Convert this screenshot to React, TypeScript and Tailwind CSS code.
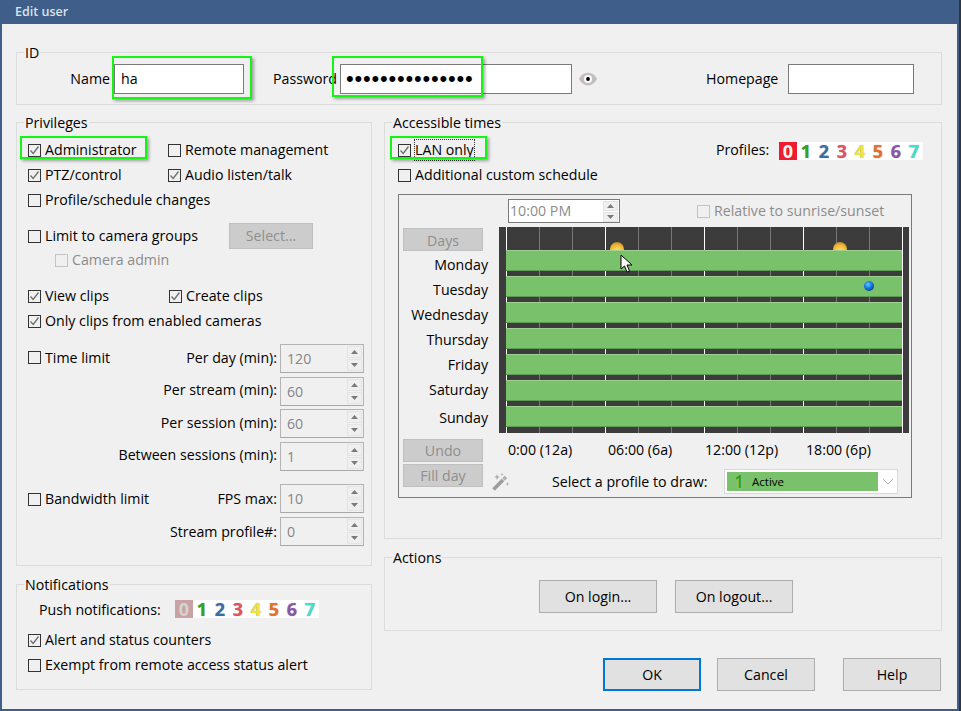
import React from 'react';

const CheckBox = ({ checked = false, disabled = false }: { checked?: boolean; disabled?: boolean }) => (
  <span className={`flex h-[13px] w-[13px] shrink-0 items-center justify-center border bg-[#f0f0f0] ${disabled ? 'border-[#c4c4c4]' : 'border-[#333333]'}`}>
    {checked && (
      <svg width="11" height="11" viewBox="0 0 11 11" fill="none">
        <path d="M1.5 5.5 L4.2 8.5 L9.5 1.5" stroke="#6e6e6e" strokeWidth="1.3" />
      </svg>
    )}
  </span>
);

const Check = ({ label, checked, disabled, focused, className = '' }: { label: string; checked?: boolean; disabled?: boolean; focused?: boolean; className?: string }) => (
  <div className={`flex h-5 items-center gap-[4px] whitespace-nowrap ${disabled ? 'text-[#8c8c8c]' : ''} ${className}`}>
    <CheckBox checked={checked} disabled={disabled} />
    <span className={focused ? 'outline-1 outline-[#333333] outline-dotted' : ''}>{label}</span>
  </div>
);

const Group = ({ title, className = '', children }: { title: string; className?: string; children: React.ReactNode }) => (
  <fieldset className={`border border-[#dcdcdc] ${className}`}>
    <legend className="ml-[7px] h-5 px-[1px] leading-[22px]">{title}</legend>
    {children}
  </fieldset>
);

const Highlight = ({ className }: { className: string }) => (
  <div className={`pointer-events-none absolute border-[2px] border-[#14f514] shadow-[2px_2px_3px_rgba(0,0,0,0.35)] ${className}`} />
);

const GrayButton = ({ label, className = '' }: { label: string; className?: string }) => (
  <div className={`flex items-center justify-center border border-[#bfbfbf] bg-[#cccccc] text-[#8f8f8f] ${className}`}>{label}</div>
);

// width and border come from the caller
const Button = ({ label, className = '' }: { label: string; className?: string }) => (
  <div className={`flex h-[33px] items-center justify-center bg-[#e1e1e1] ${className}`}>{label}</div>
);

const SpinArrows = ({ small = false }: { small?: boolean }) => (
  <div className="flex w-[15px] flex-col gap-[1px]">
    <div className={`flex items-center justify-center border border-[#e4e4e4] bg-[#efefef] ${small ? 'h-[10px]' : 'h-[12px]'}`}>
      <svg width="7" height="4" viewBox="0 0 7 4"><path d="M3.5 0 L7 4 H0 Z" fill="#7a7a7a" /></svg>
    </div>
    <div className={`flex items-center justify-center border border-[#e4e4e4] bg-[#efefef] ${small ? 'h-[10px]' : 'h-[12px]'}`}>
      <svg width="7" height="4" viewBox="0 0 7 4"><path d="M0 0 H7 L3.5 4 Z" fill="#7a7a7a" /></svg>
    </div>
  </div>
);

const SpinRow = ({ label, value, className = '', labelClass = '', left }: { label: string; value: string; className?: string; labelClass?: string; left?: React.ReactNode }) => (
  <div className={`flex h-[29px] items-center ${className}`}>
    <div className="w-[11px]" />
    <div className={`flex-1 ${labelClass}`}>{left}</div>
    <span className={`mr-[3px] whitespace-nowrap ${labelClass}`}>{label}</span>
    <div className="mr-[7px] flex h-[29px] w-[84px] items-center justify-between border border-[#b4b4b4] border-b-[#a8a8a8] bg-[#f0f0f0] pr-[1px] pl-[6px] text-[#868686]">
      <span>{value}</span>
      <SpinArrows />
    </div>
  </div>
);

const digits = [
  { n: '1', c: 'text-[#2fa31d]' },
  { n: '2', c: 'text-[#3a6ea5]' },
  { n: '3', c: 'text-[#e2535f]' },
  { n: '4', c: 'text-[#efe23c]' },
  { n: '5', c: 'text-[#e8702a]' },
  { n: '6', c: 'text-[#8b55a8]' },
  { n: '7', c: 'text-[#3fe0d0]' },
];

const ProfileChips = ({ dimmed = false, className = '' }: { dimmed?: boolean; className?: string }) => (
  <div className={`flex h-[18px] bg-white text-[18px] leading-[18px] font-bold ${className}`}>
    <span className={`w-[18px] text-center ${dimmed ? 'bg-[#c9a3a3] text-[#d4d4d4]' : 'bg-[#ee1c2e] text-[#f4f4f4]'}`}>0</span>
    {digits.map((d) => (
      <span key={d.n} className={`w-[18px] text-center [text-shadow:0_0_1px_#9a9a9a] ${d.c}`}>{d.n}</span>
    ))}
  </div>
);

const days = ['Monday', 'Tuesday', 'Wednesday', 'Thursday', 'Friday', 'Saturday'];
const hours = Array.from({ length: 12 }, (_, i) => i);

const SunIcon = ({ className }: { className: string }) => (
  <svg className={`absolute ${className}`} width="14" height="8" viewBox="0 0 14 8">
    <defs>
      <radialGradient id="sun" cx="50%" cy="70%" r="70%">
        <stop offset="0%" stopColor="#ffe680" />
        <stop offset="70%" stopColor="#f5b52c" />
        <stop offset="100%" stopColor="#b58a3c" />
      </radialGradient>
    </defs>
    <circle cx="7" cy="7" r="7" fill="url(#sun)" />
  </svg>
);

const ScheduleGrid = () => (
  <div className="relative h-[206px] w-[410px] bg-[#3c3c3c] pl-[7px]">
    <div className="absolute top-0 bottom-0 left-[7px] flex">
      {hours.map((h) => (
        <div key={h} className={`w-[33px] border-l ${h % 3 === 0 ? 'border-white' : 'border-[#777777]'}`} />
      ))}
      <div className="border-l border-white" />
    </div>
    <div className="relative flex w-[396px] flex-col gap-[5px] pt-[23px]">
      {[...days, 'Sunday'].map((d) => (
        <div key={d} className="h-[21px] border-t border-b border-t-[#9ed18f] border-b-[#5c9c52] bg-[#7ac16c]" />
      ))}
    </div>
    <SunIcon className="top-[15px] left-[111px]" />
    <SunIcon className="top-[15px] left-[334px]" />
    <svg className="absolute top-[54px] left-[365px]" width="10" height="10" viewBox="0 0 10 10">
      <defs>
        <radialGradient id="moon" cx="40%" cy="35%" r="70%">
          <stop offset="0%" stopColor="#6ec4ff" />
          <stop offset="55%" stopColor="#0a78e8" />
          <stop offset="100%" stopColor="#123a78" />
        </radialGradient>
      </defs>
      <circle cx="5" cy="5" r="5" fill="url(#moon)" />
    </svg>
    <svg className="absolute top-[27px] left-[121px]" width="14" height="20" viewBox="0 0 14 20">
      <path d="M1 1 V15 L4.5 12 L7 18 L9.5 17 L7 11 H12 Z" fill="white" stroke="black" strokeWidth="1" />
    </svg>
  </div>
);

export default function App() {
  return (
    <div className="relative h-[711px] w-[961px] overflow-hidden bg-[#3f5f8a] pr-[4px] pb-[2px] pl-[2px] font-['Open_Sans','Noto_Sans',sans-serif] text-[14.2px] leading-5 text-black">
      <div className="h-6 pl-[13px] text-[12.5px] leading-[23px] font-semibold text-[#dbe2ea]">Edit user</div>

      <div className="h-[685px] bg-[#f0f0f0] pt-[18px] pl-[14px]">
        <Group title="ID" className="h-[63px] w-[926px]">
          <div className="mt-[2px] flex h-[30px] items-center">
            <span className="w-[93px] shrink-0 text-right">Name</span>
            <div className="relative ml-[4px] flex h-[30px] w-[130px] shrink-0 items-center border border-[#7a7a7a] bg-white pl-[6px]">
              ha
              <Highlight className="-top-[9px] -left-[3px] h-[43px] w-[140px]" />
            </div>
            <span className="ml-[29px] w-[67px] shrink-0 whitespace-nowrap">Password</span>
            <div className="relative flex h-[30px] w-[232px] shrink-0 items-center border border-[#7a7a7a] bg-white pl-[5px] font-['Liberation_Sans',sans-serif] text-[22px] tracking-[0.8px]">
              •••••••••••••••
              <Highlight className="-top-[9px] -left-[9px] h-[41px] w-[151px]" />
            </div>
            <svg className="ml-[7px] shrink-0" width="18" height="14" viewBox="0 0 18 14">
              <path d="M0 7 C4 -1.5 14 -1.5 18 7 C14 15.5 4 15.5 0 7 Z" fill="#c4bdbd" />
              <circle cx="9" cy="7" r="4" fill="white" />
              <circle cx="9" cy="7" r="1.9" fill="black" />
            </svg>
            <span className="ml-[109px] w-[82px] shrink-0 whitespace-nowrap">Homepage</span>
            <div className="h-[30px] w-[126px] shrink-0 border border-[#7a7a7a] bg-white" />
          </div>
        </Group>

        <div className="mt-[7px] flex gap-[12px]">
          <div className="flex w-[356px] flex-col">
            <Group title="Privileges" className="h-[454px]">
              <div className="flex flex-col pl-[11px]">
                <div className="relative mt-[8px] flex">
                  <Check label="Administrator" checked className="w-[140px]" />
                  <Check label="Remote management" />
                  <Highlight className="-top-[4px] -left-[8px] h-[23px] w-[127px]" />
                </div>
                <div className="mt-[5px] flex">
                  <Check label="PTZ/control" checked className="w-[140px]" />
                  <Check label="Audio listen/talk" checked />
                </div>
                <Check label="Profile/schedule changes" className="mt-[5px]" />
                <div className="mt-[13px] flex items-center">
                  <Check label="Limit to camera groups" className="w-[201px]" />
                  <GrayButton label="Select..." className="h-[26px] w-[84px]" />
                </div>
                <Check label="Camera admin" disabled className="mt-[1px] ml-[27px]" />
                <div className="mt-[16px] flex">
                  <Check label="View clips" checked className="w-[141px]" />
                  <Check label="Create clips" checked />
                </div>
                <Check label="Only clips from enabled cameras" checked className="mt-[5px]" />
              </div>
              <div className="mt-[13px] flex flex-col">
                <SpinRow label="Per day (min):" value="120" labelClass="mb-[2px]" left={<Check label="Time limit" />} />
                <SpinRow label="Per stream (min):" value="60" labelClass="mb-[3px]" className="mt-[4px]" />
                <SpinRow label="Per session (min):" value="60" labelClass="mb-[2px]" className="mt-[3px]" />
                <SpinRow label="Between sessions (min):" value="1" labelClass="mb-[3px]" className="mt-[4px]" />
                <SpinRow label="FPS max:" value="10" labelClass="mt-[1px]" className="mt-[13px]" left={<Check label="Bandwidth limit" />} />
                <SpinRow label="Stream profile#:" value="0" labelClass="mt-[1px]" className="mt-[4px]" />
              </div>
            </Group>

            <Group title="Notifications" className="mt-[8px] h-[116px]">
              <div className="flex flex-col pl-[11px]">
                <div className="mt-[6px] flex items-start">
                  <span className="ml-[11px] w-[136px]">Push notifications:</span>
                  <ProfileChips dimmed />
                </div>
                <Check label="Alert and status counters" checked className="mt-[10px]" />
                <Check label="Exempt from remote access status alert" className="mt-[5px]" />
              </div>
            </Group>
          </div>

          <div className="flex w-[558px] flex-col">
            <Group title="Accessible times" className="h-[427px]">
              <div className="relative mt-[8px] ml-[13px] flex h-5 items-center">
                <Check label="LAN only" checked focused className="w-[318px]" />
                <Highlight className="-top-[4px] -left-[8px] h-[23px] w-[97px]" />
                <span className="w-[63px]">Profiles:</span>
                <ProfileChips className="mt-[2px]" />
              </div>
              <Check label="Additional custom schedule" className="mt-[5px] ml-[13px]" />

              <div className="mt-[9px] ml-[13px] h-[304px] w-[514px] border border-[#7a7a7a]">
                <div className="flex pt-[4px]">
                  <div className="ml-[109px] flex h-[24px] w-[112px] items-center justify-between border border-[#7a7a7a] bg-white pr-[1px] pl-[1px] text-[#8c8c8c]">
                    <span>10:00 PM</span>
                    <SpinArrows small />
                  </div>
                  <Check label="Relative to sunrise/sunset" disabled className="mt-[2px] ml-[77px]" />
                </div>

                <div className="flex pt-[4px]">
                  <div className="ml-[4px] w-[85px]">
                    <GrayButton label="Days" className="mt-[1px] h-[23px] w-[80px] pt-[2px]" />
                    <div className="flex flex-col">
                      {days.map((d) => (
                        <div key={d} className="h-[25px] text-right leading-[27px]">{d}</div>
                      ))}
                      <div className="mt-[3px] h-[25px] text-right leading-[27px]">Sunday</div>
                    </div>
                  </div>
                  <div className="ml-[11px]">
                    <ScheduleGrid />
                  </div>
                </div>

                <div className="flex">
                  <div className="ml-[4px] w-[80px] pt-[6px]">
                    <GrayButton label="Undo" className="h-[23px] w-[80px]" />
                    <GrayButton label="Fill day" className="mt-[2px] h-[23px] w-[80px]" />
                  </div>
                  <div className="ml-[9px] flex-1">
                    <div className="mt-[7px] flex h-5 pl-[16px] whitespace-nowrap">
                      <span className="w-[100px]">0:00 (12a)</span>
                      <span className="w-[97px]">06:00 (6a)</span>
                      <span className="w-[101px]">12:00 (12p)</span>
                      <span>18:00 (6p)</span>
                    </div>
                    <div className="mt-[9px] flex h-[25px] items-center">
                      <svg className="shrink-0" width="18" height="18" viewBox="0 0 18 18" fill="none">
                        <path d="M1.5 16.5 L11 7" stroke="#9c9c9c" strokeWidth="3.5" />
                        <path d="M11.5 6.5 L14 4" stroke="#b0b0b0" strokeWidth="3.5" />
                        <path d="M5 1 L5.8 3.2 L8 4 L5.8 4.8 L5 7 L4.2 4.8 L2 4 L4.2 3.2 Z M15.5 9 L16 10.5 L17.5 11 L16 11.5 L15.5 13 L15 11.5 L13.5 11 L15 10.5 Z M10 0 L10.4 1.1 L11.5 1.5 L10.4 1.9 L10 3 L9.6 1.9 L8.5 1.5 L9.6 1.1 Z" fill="#a8a8a8" />
                      </svg>
                      <span className="ml-[42px] w-[172px] pt-[1px] whitespace-nowrap">Select a profile to draw:</span>
                      <div className="flex h-[25px] w-[174px] items-center border border-[#d9d9d9] bg-white p-[2px]">
                        <div className="flex h-full w-[151px] items-center bg-[#7ac16c] text-[11.5px]">
                          <span className="ml-[7px] w-[18px] text-[17px] font-bold text-[#2fa31d] [text-shadow:0_0_1px_#d5f0cf]">1</span>
                          <span>Active</span>
                        </div>
                        <svg className="ml-[4px]" width="12" height="7" viewBox="0 0 12 7" fill="none">
                          <path d="M1 1 L6 6 L11 1" stroke="#b8b8b8" strokeWidth="1" />
                        </svg>
                      </div>
                    </div>
                  </div>
                </div>
              </div>
            </Group>

            <Group title="Actions" className="mt-[8px] h-[84px]">
              <div className="mt-[13px] ml-[154px] flex gap-[18px]">
                <Button label="On login..." className="w-[118px] border border-[#adadad]" />
                <Button label="On logout..." className="w-[118px] border border-[#adadad]" />
              </div>
            </Group>

            <div className="mt-[27px] flex">
              <Button label="OK" className="ml-[219px] w-[98px] border-[2px] border-[#0078d7]" />
              <Button label="Cancel" className="ml-[16px] w-[98px] border border-[#adadad]" />
              <Button label="Help" className="ml-[28px] w-[98px] border border-[#adadad]" />
            </div>
          </div>
        </div>
      </div>
      <div className="absolute top-0 right-0 bottom-0 w-[2px] bg-[#2f3640]" />
    </div>
  );
}
